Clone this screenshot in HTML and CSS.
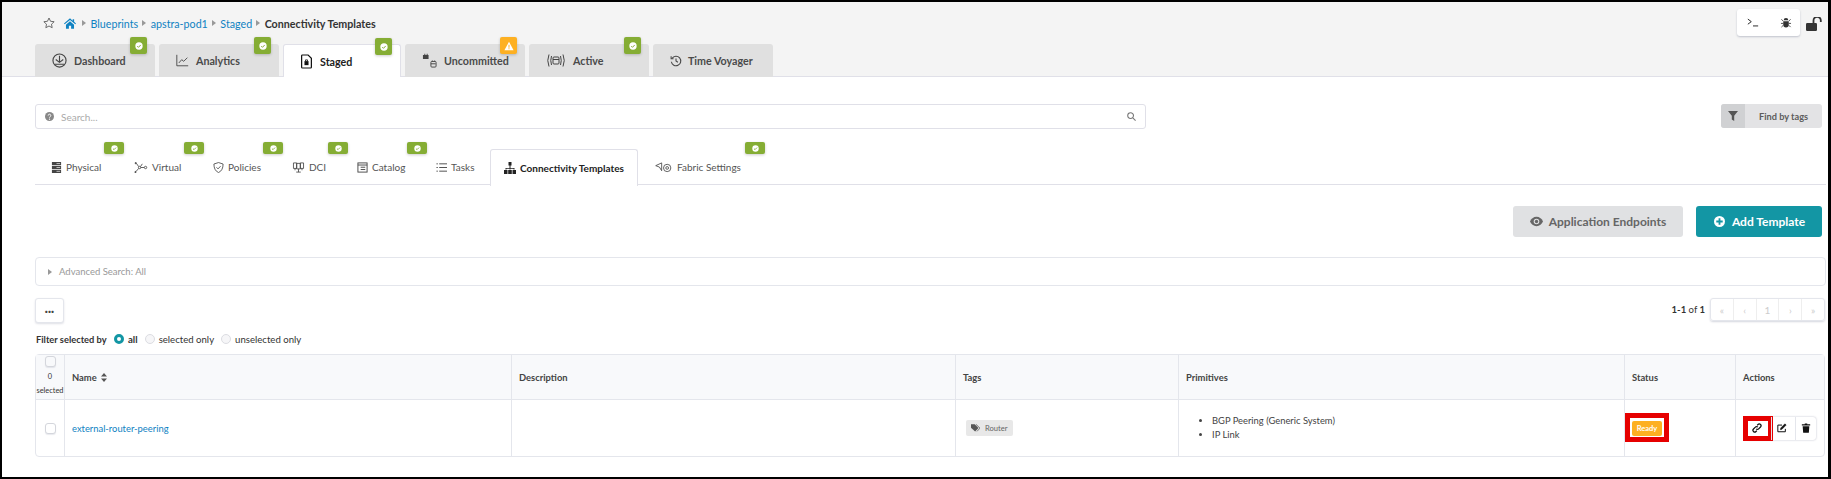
FILE: index.html
```html
<!DOCTYPE html>
<html lang="en">
<head>
  <meta charset="UTF-8" />
  <title>Connectivity Templates</title>
  <link rel="stylesheet" href="styles.css">
</head>
<body>
  <svg class="defs" width="0" height="0">
    <symbol id="ok" viewBox="0 0 12 12">
      <circle cx="6" cy="6" r="5.5" fill="#fff"/>
      <path d="M3.4 6.2 5.2 8 8.6 4.4" fill="none" stroke="#85ad34" stroke-width="1.5"/>
    </symbol>
    <symbol id="caret" viewBox="0 0 4 6"><path d="M0 0 4 3 0 6z" fill="#999"/></symbol>
  </svg>
  <div class="page">
    <header class="top">
      <div class="top-left">
        <nav class="crumbs">
          <svg class="star" viewBox="0 0 14 14"><path d="M7 1.2 8.8 5l4.2.5-3.1 2.9.8 4.1L7 10.5l-3.7 2 .8-4.1L1 5.5 5.2 5z" fill="none" stroke="#555" stroke-width="1"/></svg>
          <svg class="home" viewBox="0 0 14 12"><path d="M7 0 0 6l.8 1L7 1.8 13.200 7l.8-1-2.200-1.900V1h-1.700v1.700zM2.300 7.500 7 3.500l4.700 4V12H8.300V8.600H5.700V12H2.300z" fill="#0f82c2"/></svg>
          <svg class="sep" viewBox="0 0 4 6"><use href="#caret"/></svg>
          <a href="#">Blueprints</a>
          <svg class="sep" viewBox="0 0 4 6"><use href="#caret"/></svg>
          <a href="#">apstra-pod1</a>
          <svg class="sep" viewBox="0 0 4 6"><use href="#caret"/></svg>
          <a href="#">Staged</a>
          <svg class="sep" viewBox="0 0 4 6"><use href="#caret"/></svg>
          <b>Connectivity Templates</b>
        </nav>
        <div class="main-tabs">
          <div class="main-tab">
            <svg class="ic" viewBox="0 0 16 16" fill="none" stroke="#444" stroke-width="1.2"><circle cx="8" cy="8" r="7"/><path d="M8 3v7M4 7l4 3 4-3M3 12h10"/></svg>Dashboard
            <span class="flag"><svg viewBox="0 0 12 12"><use href="#ok"/></svg></span>
          </div>
          <div class="main-tab">
            <svg class="ic slim" viewBox="0 0 16 16" fill="none" stroke="#444" stroke-width="1.1"><path d="M1 1v13.500h14M3.500 11 7 7l2.500 2L14 4.500"/></svg>Analytics
            <span class="flag"><svg viewBox="0 0 12 12"><use href="#ok"/></svg></span>
          </div>
          <div class="main-tab active">
            <svg class="ic slim" viewBox="0 0 16 18" fill="none" stroke="#111" stroke-width="1.5"><path d="M3 1h7l4 4v11a1 1 0 0 1-1 1H3a1 1 0 0 1-1-1V2a1 1 0 0 1 1-1z"/><path d="M5.500 8.500h5v5h-5z" fill="#111" stroke="none"/><path d="M6.800 8.500V7h2.400v1.500" stroke-width="1"/></svg>Staged
            <span class="flag"><svg viewBox="0 0 12 12"><use href="#ok"/></svg></span>
          </div>
          <div class="main-tab">
            <svg class="ic" viewBox="0 0 16 16"><path d="M1 2h1.500V.8h1V2h1.500V.8h1V2h1v4.500H1z" fill="#444"/><rect x="9.500" y="9" width="5.500" height="6" rx="1" fill="none" stroke="#444"/><path d="M9.500 11.500h5M11 9V8M13.500 9V8" stroke="#444" fill="none"/></svg>Uncommitted
            <span class="flag warn"><svg viewBox="0 0 12 12"><path d="M6 1 11.500 11H.5z" fill="#fff"/><path d="M5.400 4.500h1.200v3.500H5.400zM5.400 8.700h1.200v1.100H5.400z" fill="#fdb022"/></svg></span>
          </div>
          <div class="main-tab">
            <svg class="ic wide" viewBox="0 0 20 14" fill="none" stroke="#444" stroke-width="1"><path d="M3 1Q.5 7 3 13M5.500 2.500Q4 7 5.500 11.500M17 1q2.500 6 0 12M14.500 2.500q1.500 4.500 0 9"/><rect x="7" y="3.500" width="6" height="7" rx="1"/><path d="M7 6h6"/></svg>Active
            <span class="flag"><svg viewBox="0 0 12 12"><use href="#ok"/></svg></span>
          </div>
          <div class="main-tab">
            <svg class="ic narrow" viewBox="0 0 16 16" fill="none" stroke="#444" stroke-width="1.4"><path d="M2.800 4.500A6.300 6.300 0 1 1 1.800 9"/><path d="M1.500 1.800v3.200h3.200M8 4.500V8l2.500 1.700"/></svg>Time Voyager
          </div>
        </div>
      </div>
      <div class="top-right">
        <div class="tools">
          <svg viewBox="0 0 14 10" fill="none" stroke="#222" stroke-width="1.1"><path d="M1 1l4 3-4 3M7 9h6"/></svg>
          <svg viewBox="0 0 12 12"><path d="M3.500 3.500a2.500 2.500 0 0 1 5 0zM3 4.500h6v4a3 3 0 0 1-6 0z" fill="#333"/><path d="M1 2.500l2 2M11 2.500l-2 2M.5 7H3M11.500 7H9M1 11l2-2M11 11 9 9" stroke="#333" fill="none" stroke-width=".9"/></svg>
        </div>
        <svg class="lock" viewBox="0 0 16 14"><rect x="0" y="6" width="11" height="8" rx="1.2" fill="#333"/><path d="M7.500 6V3.500a3.200 3.200 0 0 1 7.300-.2V5" fill="none" stroke="#333" stroke-width="1.800"/></svg>
      </div>
    </header>

    <main class="content">
      <div class="search-row">
        <div class="search">
          <svg class="q" viewBox="0 0 10 10"><circle cx="5" cy="5" r="5" fill="#888"/><path d="M3.500 4a1.500 1.500 0 1 1 2.300 1.200c-.6.400-.8.600-.8 1.100" fill="none" stroke="#fff" stroke-width="1"/><circle cx="5" cy="8" r=".7" fill="#fff"/></svg>
          <span class="hint">Search...</span>
          <svg class="lens" viewBox="0 0 10 10" fill="none" stroke="#777" stroke-width="1.2"><circle cx="4" cy="4" r="3.200"/><path d="M6.500 6.500 9.500 9.500"/></svg>
        </div>
        <div class="find">
          <span class="find-ic"><svg viewBox="0 0 10 10"><path d="M0 0h10L6.200 4.800V10L3.800 8.500V4.800z" fill="#555"/></svg></span>
          <span class="find-txt">Find by tags</span>
        </div>
      </div>

      <div class="sub-tabs">
        <div class="sub-tab w-phys">
          <svg viewBox="0 0 12 12"><path d="M1 0h10v3.500H1zM1 4.300h10v3.400H1zM1 8.500h10V12H1z" fill="#444"/><path d="M6 1.700h4M6 6h4M6 10.200h4" stroke="#fff" stroke-width=".7"/></svg>Physical
          <span class="flag"><svg viewBox="0 0 12 12"><use href="#ok"/></svg></span>
        </div>
        <div class="sub-tab w-virt">
          <svg class="mid" viewBox="0 0 16 12" fill="none" stroke="#444" stroke-width=".9"><circle cx="7" cy="6" r="1.300"/><path d="M6 5 3.500 1.500M6 7l-3 3.500M8 5l2-3M8.300 6H12"/><circle cx="13.500" cy="6" r="1.300"/><circle cx="2.800" cy="1.200" r=".7" fill="#444"/><circle cx="2.500" cy="11" r=".7" fill="#444"/></svg>Virtual
          <span class="flag"><svg viewBox="0 0 12 12"><use href="#ok"/></svg></span>
        </div>
        <div class="sub-tab w-pol">
          <svg viewBox="0 0 12 12" fill="none" stroke="#444" stroke-width=".9"><path d="M6 .6 11 2.200c0 4.500-1.500 7.800-5 9.300C2.500 10 1 6.700 1 2.200z"/><path d="M3.800 5.800 5.500 7.500l2.800-3"/></svg>Policies
          <span class="flag"><svg viewBox="0 0 12 12"><use href="#ok"/></svg></span>
        </div>
        <div class="sub-tab w-dci">
          <svg class="dci" viewBox="0 0 12 12" fill="none" stroke="#444" stroke-width=".9"><path d="M.5 1h3.500v6H.5zM8 1h3.500v6H8zM4 1.500h4v6H4zM6 7.500V11M3.500 11h5M2.200 7v2M9.800 7v2"/></svg>DCI
          <span class="flag"><svg viewBox="0 0 12 12"><use href="#ok"/></svg></span>
        </div>
        <div class="sub-tab w-cat">
          <svg viewBox="0 0 12 12" fill="none" stroke="#444" stroke-width="1"><rect x="1" y="1" width="10" height="10"/><path d="M1 3.300h10M4 5.700h5M4 8.200h5"/></svg>Catalog
          <span class="flag"><svg viewBox="0 0 12 12"><use href="#ok"/></svg></span>
        </div>
        <div class="sub-tab w-task">
          <svg viewBox="0 0 12 12" fill="none" stroke="#444" stroke-width="1"><path d="M3.500 2H12M3.500 6H12M3.500 10H12M.5 2h1.500M.5 6h1.500M.5 10h1.500"/></svg>Tasks
        </div>
        <div class="sub-tab w-conn active">
          <svg viewBox="0 0 12 12"><path d="M4.500 0h3v3.500h-3zM5.500 3.500h1V6h-1zM1.500 6h9v1.500h-1V6.800h-3v.7h-1v-.7h-3v.7h-1zM0 8h3.500v4H0zM4.200 8h3.600v4H4.200zM8.500 8H12v4H8.500z" fill="#222"/></svg>Connectivity Templates
        </div>
        <div class="sub-tab w-fab">
          <svg class="wide" viewBox="0 0 18 12" fill="none" stroke="#444" stroke-width=".9"><path d="M.5 4 7 1v8.500L4.500 5.500z"/><circle cx="13" cy="6.500" r="4"/><circle cx="13" cy="6.500" r="1.500"/></svg>Fabric Settings
          <span class="flag"><svg viewBox="0 0 12 12"><use href="#ok"/></svg></span>
        </div>
      </div>

      <div class="actions-row">
        <button class="btn btn-grey">
          <svg viewBox="0 0 14 10"><path d="M7 0c3.300 0 5.800 2.300 7 5-1.200 2.700-3.700 5-7 5S1.200 7.700 0 5c1.200-2.700 3.700-5 7-5z" fill="#666"/><circle cx="7" cy="5" r="3" fill="#e0e1e3"/><circle cx="7" cy="5" r="1.800" fill="#666"/></svg>
          Application Endpoints
        </button>
        <button class="btn btn-teal">
          <svg viewBox="0 0 12 12"><circle cx="6" cy="6" r="6" fill="#fff"/><path d="M5 2.500h2V5h2.500v2H7v2.500H5V7H2.500V5H5z" fill="#1396a4"/></svg>
          Add Template
        </button>
      </div>

      <div class="adv-search">
        <svg viewBox="0 0 4 6"><use href="#caret"/></svg>
        <span>Advanced Search: All</span>
      </div>

      <div class="pager-row">
        <button class="more">&middot;&middot;&middot;</button>
        <div class="pager">
          <span class="count"><b>1-1</b> of <b>1</b></span>
          <div class="pages">
            <span>&laquo;</span><span>&lsaquo;</span><span>1</span><span>&rsaquo;</span><span>&raquo;</span>
          </div>
        </div>
      </div>

      <div class="filter">
        <b>Filter selected by</b>
        <label class="on"><i></i><b>all</b></label>
        <label><i></i>selected only</label>
        <label><i></i>unselected only</label>
      </div>

      <table class="grid">
        <colgroup>
          <col class="c-check"><col class="c-name"><col class="c-desc"><col class="c-tags"><col class="c-prim"><col class="c-stat"><col class="c-act">
        </colgroup>
        <thead>
          <tr>
            <th class="check-cell"><span class="box"></span><small>0</small><small>selected</small></th>
            <th>Name <svg class="sort" viewBox="0 0 6 9"><path d="M3 0l3 3.600H0zM3 9 0 5.400h6z" fill="#555"/></svg></th>
            <th>Description</th>
            <th>Tags</th>
            <th>Primitives</th>
            <th>Status</th>
            <th>Actions</th>
          </tr>
        </thead>
        <tbody>
          <tr>
            <td class="check-cell"><span class="box"></span></td>
            <td><a href="#">external-router-peering</a></td>
            <td></td>
            <td><span class="tag"><svg viewBox="0 0 12 10"><path d="M0 0h5l5 5-4.500 4.500L0 4.500z" fill="#555"/><path d="M6.500 0 12 5.200 8 9.500" fill="none" stroke="#555"/></svg>Router</span></td>
            <td><ul class="prims"><li>BGP Peering (Generic System)</li><li>IP Link</li></ul></td>
            <td class="status-cell"><span class="mark"><span class="ready">Ready</span></span></td>
            <td>
              <div class="row-btns">
                <span class="row-btn">
                  <svg viewBox="0 0 12 12" fill="none" stroke="#111" stroke-width="1.5"><path d="M5 7a2 2 0 0 0 3 0l2.200-2.200a2 2 0 0 0-3-3L6.200 2.800"/><path d="M7 5a2 2 0 0 0-3 0L1.800 7.200a2 2 0 0 0 3 3l1-1"/></svg>
                  <span class="mark-btn"></span>
                </span>
                <span class="row-btn">
                  <svg viewBox="0 0 12 12" fill="none" stroke="#111" stroke-width="1.2"><path d="M10 7v3.500H1v-8h5"/><path d="M4.500 6 4 8l2-.5L11 2.500 9.500 1z" fill="#111" stroke-width=".6"/></svg>
                </span>
                <span class="row-btn">
                  <svg viewBox="0 0 12 12"><path d="M1 1.500h3.500V.5h3v1H11V3H1zM2 3.800h8l-.6 8H2.600z" fill="#111"/></svg>
                </span>
              </div>
            </td>
          </tr>
        </tbody>
      </table>
    </main>
  </div>
</body>
</html>
```

FILE: styles.css
```css
* {
  box-sizing: border-box;
}

body {
  margin: 0;
  font-family: 'Lato', sans-serif;
  font-size: 11px;
  color: #444;
  background: #fff;
}

a {
  color: #0f82c2;
  text-decoration: none;
}

.defs {
  position: absolute;
}

.page {
  height: 479px;
  border: solid #000;
  border-width: 2px 3px 2px 2px;
  overflow: hidden;
}

/* top grey header */
.top {
  display: flex;
  justify-content: space-between;
  height: 75px;
  padding: 7px 6px 0 33px;
  background: #f4f4f4;
  border-bottom: 1px solid #e0e0e8;
}

.crumbs {
  display: flex;
  align-items: center;
  height: 28px;
  font-size: 10.7px;
  color: #333;
}
.crumbs .star {
  width: 12px;
  height: 12px;
  margin-left: 8px;
  margin-right: 9px;
}
.crumbs .home {
  width: 12px;
  height: 11px;
  margin-right: 2px;
}
.crumbs .sep {
  width: 4px;
  height: 6px;
  margin: 0 4.5px 0 4px;
}

.main-tabs {
  display: flex;
  gap: 4px;
  margin-top: 7px;
}
.main-tab {
  position: relative;
  display: flex;
  align-items: center;
  gap: 7px;
  width: 120px;
  height: 33px;
  padding-left: 17px;
  background: #e0e0e0;
  border-radius: 3px 3px 0 0;
  font-size: 10.7px;
  font-weight: 700;
  color: #4a4a4a;
}
.main-tab.active {
  width: 118px;
  padding-left: 16px;
  background: #fff;
  color: #222;
  border: solid #e0e0e8;
  border-width: 1px 1px 0;
}
.main-tab .ic {
  width: 15px;
  height: 15px;
}
.main-tab .ic.slim {
  width: 13px;
}
.main-tab .ic.narrow {
  width: 12px;
  height: 12px;
  margin-right: -1px;
}
.main-tab .ic.wide {
  width: 20px;
}

.flag {
  position: absolute;
  top: -7px;
  right: 8px;
  display: flex;
  align-items: center;
  justify-content: center;
  width: 17px;
  height: 17px;
  background: #85ad34;
  border-radius: 2px;
  box-shadow: 0 1px 3px rgba(0, 0, 0, 0.2);
}
.flag svg {
  width: 8px;
  height: 8px;
}
.flag.warn {
  background: #fdb022;
}
.flag.warn svg {
  width: 10px;
  height: 10px;
}

.top-right {
  display: flex;
  gap: 6px;
}
.tools {
  display: flex;
  align-items: center;
  gap: 21px;
  width: 63px;
  height: 27px;
  padding-left: 10px;
  background: #fff;
  border-radius: 3px;
  box-shadow: 0 1px 2px rgba(40, 50, 90, 0.25);
}
.tools svg {
  width: 12px;
  height: 11px;
}
.lock {
  width: 16px;
  height: 14px;
  margin-top: 8px;
}

/* content */
.content {
  padding: 27px 2px 0 33px;
}

.search-row {
  display: flex;
  justify-content: space-between;
  padding-right: 4px;
}
.search {
  display: flex;
  align-items: center;
  width: 1111px;
  height: 25px;
  padding: 0 9px;
  border: 1px solid #e0e0e8;
  border-radius: 3px;
}
.search .q {
  width: 9px;
  height: 9px;
  margin-right: 7px;
}
.search .hint {
  flex: 1;
  font-size: 10px;
  color: #aaa;
}
.search .lens {
  width: 9px;
  height: 9px;
}
.find {
  display: flex;
  width: 101px;
  height: 24px;
  border-radius: 3px;
  overflow: hidden;
  background: #e3e3e5;
  font-size: 9.2px;
  font-weight: 700;
  color: #5c5c5c;
}
.find-ic {
  display: flex;
  align-items: center;
  justify-content: center;
  width: 24px;
  background: #d0d1d3;
}
.find-ic svg {
  width: 10px;
  height: 10px;
}
.find-txt {
  flex: 1;
  align-self: center;
  padding-left: 14px;
}

.sub-tabs {
  display: flex;
  height: 36px;
  margin-top: 20px;
  border-bottom: 1px solid #e0e0e8;
}
.sub-tab {
  position: relative;
  display: flex;
  align-items: center;
  gap: 4px;
  height: 36px;
  padding-left: 16px;
  color: #555;
  font-size: 10px;
  white-space: nowrap;
}
.sub-tab svg {
  width: 11px;
  height: 11px;
}
.sub-tab svg.mid {
  width: 15px;
}
.sub-tab svg.dci {
  width: 13px;
}
.sub-tab svg.wide {
  width: 19px;
}
.sub-tab .flag {
  top: -7px;
  right: -7px;
  width: 20px;
  height: 12px;
}
.sub-tab .flag svg {
  width: 7px;
  height: 7px;
}
.sub-tab.active {
  height: 37px;
  padding-left: 13px;
  background: #fff;
  color: #222;
  font-size: 10px;
  font-weight: 700;
  border: solid #e0e0e8;
  border-width: 1px 1px 0;
  border-radius: 3px 3px 0 0;
}
.sub-tab.active svg {
  width: 12px;
  height: 12px;
}
.w-phys { width: 82px; }
.w-virt { width: 80px; }
.w-pol { width: 79px; }
.w-dci { width: 65px; }
.w-cat { width: 79px; }
.w-task { width: 70px; }
.w-conn { width: 148px; }
.w-fab { width: 120px; }

.actions-row {
  display: flex;
  justify-content: flex-end;
  gap: 13px;
  margin-top: 21px;
  padding-right: 4px;
}
.btn {
  display: flex;
  align-items: center;
  justify-content: center;
  gap: 6px;
  height: 31px;
  border: 0;
  border-radius: 3px;
  font-family: inherit;
  font-size: 12px;
  font-weight: 700;
}
.btn svg {
  height: 11px;
  width: 13px;
}
.btn-grey {
  width: 170px;
  background: #e0e1e3;
  color: #666;
}
.btn-teal {
  width: 126px;
  background: #1396a4;
  color: #fff;
}

.adv-search {
  display: flex;
  align-items: center;
  gap: 7px;
  height: 29px;
  margin-top: 20px;
  padding-left: 12px;
  border: 1px solid #e4e6ec;
  border-radius: 4px;
  font-size: 9.5px;
  color: #999;
}
.adv-search svg {
  width: 4px;
  height: 6px;
}

.pager-row {
  display: flex;
  justify-content: space-between;
  margin-top: 12px;
  padding-right: 1px;
}
.more {
  width: 29px;
  height: 25px;
  padding: 0;
  background: #fff;
  border: 1px solid #e4e6ec;
  border-radius: 3px;
  box-shadow: 0 1px 2px rgba(40, 50, 90, 0.15);
  font-family: inherit;
  font-size: 11px;
  font-weight: 900;
  color: #444;
}
.pager {
  display: flex;
  gap: 5px;
  align-items: flex-start;
}
.count {
  font-size: 9.5px;
  line-height: 23px;
  color: #333;
}
.pages {
  display: flex;
  height: 23px;
  width: 115px;
  border: 1px solid #e4e6ec;
  border-radius: 3px;
  box-shadow: 0 1px 2px rgba(40, 50, 90, 0.2);
}
.pages span {
  flex: 1;
  display: flex;
  align-items: center;
  justify-content: center;
  color: #ccc;
  font-size: 10px;
  border-left: 1px solid #eee;
}
.pages span:first-child {
  border-left: 0;
}

.filter {
  display: flex;
  align-items: center;
  gap: 7px;
  height: 14px;
  margin-top: 9px;
  font-size: 9.6px;
  color: #333;
}
.filter label {
  display: flex;
  align-items: center;
  gap: 4px;
}
.filter > b {
  width: 70px;
  margin-left: 1px;
  margin-right: 1px;
  font-size: 9.3px;
  white-space: nowrap;
}
.filter label i {
  width: 10px;
  height: 10px;
  border: 1px solid #dcdde2;
  border-radius: 50%;
  background: #f6f6f8;
}
.filter label.on i {
  border: 3px solid #1396a4;
  background: #fff;
}

/* table */
.grid {
  width: 1790px;
  margin-top: 8px;
  border-collapse: separate;
  border-spacing: 0;
  table-layout: fixed;
  border: 1px solid #e4e6ec;
  border-radius: 4px;
  font-size: 9.4px;
}
.c-check { width: 28px; }
.c-name { width: 447px; }
.c-desc { width: 444px; }
.c-tags { width: 223px; }
.c-prim { width: 446px; }
.c-stat { width: 111px; }
.c-act { width: 89px; }

.grid th {
  height: 45px;
  padding: 0 7px;
  background: #f8f9fb;
  border-bottom: 1px solid #e4e6ec;
  border-left: 1px solid #e4e6ec;
  text-align: left;
  font-weight: 700;
  color: #444;
}
.grid td {
  height: 56px;
  padding: 0 7px;
  border-left: 1px solid #e4e6ec;
}
.grid th:first-child,
.grid td:first-child {
  border-left: 0;
}
.grid .check-cell {
  padding: 0;
  text-align: center;
}
.check-cell small {
  display: block;
  font-size: 7.4px;
  font-weight: 400;
  line-height: 14px;
  color: #333;
}
.box {
  display: block;
  width: 11px;
  height: 11px;
  margin: 0 auto 3px;
  border: 1px solid #d4d6dc;
  border-radius: 3px;
  background: #f8f9fb;
  box-shadow: 0 1px 1px rgba(40, 50, 90, 0.1);
}
td.check-cell .box {
  margin-bottom: 0;
  background: #fff;
}
.sort {
  width: 6px;
  height: 9px;
  margin-left: 2px;
  vertical-align: -1px;
}

.tag {
  display: inline-flex;
  align-items: center;
  gap: 5px;
  height: 16px;
  margin-left: 3px;
  padding: 0 5px;
  background: #e8e8e8;
  border-radius: 2px;
  font-size: 7.6px;
  color: #666;
}
.tag svg {
  width: 9px;
  height: 8px;
}

.prims {
  margin: 0;
  padding-left: 26px;
  color: #444;
  line-height: 14.5px;
}

.grid .status-cell {
  padding: 0;
}
.mark {
  display: inline-block;
  margin-top: -1px;
  padding: 3px 2px 1px;
  border: 5px solid #e60000;
  vertical-align: middle;
}
.ready {
  display: block;
  width: 30px;
  height: 15px;
  background: #fdb022;
  border-radius: 2px;
  font-size: 7.5px;
  font-weight: 700;
  line-height: 15px;
  text-align: center;
  color: #fff;
}

.row-btns {
  display: flex;
  width: 69px;
  height: 23px;
  margin-left: 4px;
  background: #fff;
  border-radius: 3px;
  box-shadow: 0 0 2px rgba(40, 50, 90, 0.35);
}
.row-btn {
  position: relative;
  flex: 1;
  display: flex;
  align-items: center;
  justify-content: center;
  border-left: 1px solid #e4e6ec;
}
.row-btn:first-child {
  padding-right: 4px;
  border-left: 0;
}
.row-btn:nth-child(2) {
  padding-right: 3px;
}
.row-btn svg {
  width: 10px;
  height: 10px;
}
.mark-btn {
  position: absolute;
  top: -1px;
  left: -4px;
  width: 30px;
  height: 25px;
  border: 5px solid #e60000;
}
```
